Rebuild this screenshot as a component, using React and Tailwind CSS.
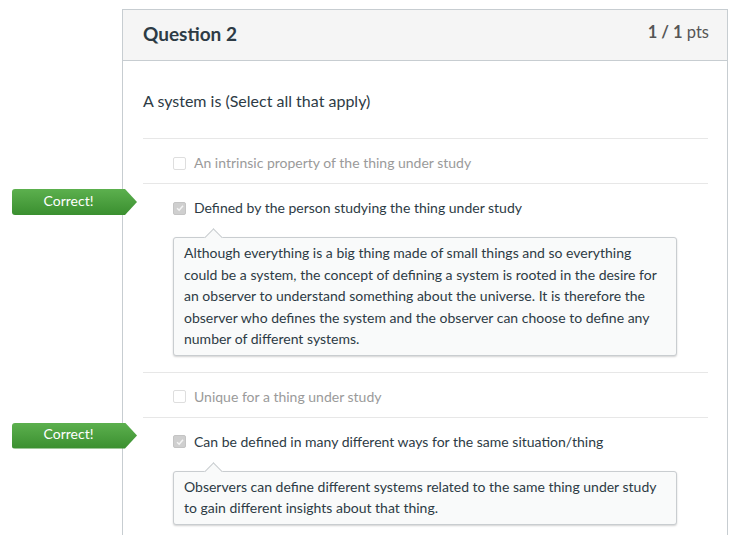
import React from "react";

const answers = [
  { text: "An intrinsic property of the thing under study", selected: false },
  {
    text: "Defined by the person studying the thing under study",
    selected: true,
    comment:
      "Although everything is a big thing made of small things and so everything could be a system, the concept of defining a system is rooted in the desire for an observer to understand something about the universe. It is therefore the observer who defines the system and the observer can choose to define any number of different systems.",
  },
  { text: "Unique for a thing under study", selected: false },
  {
    text: "Can be defined in many different ways for the same situation/thing",
    selected: true,
    comment:
      "Observers can define different systems related to the same thing under study to gain different insights about that thing.",
  },
];

function CorrectBadge() {
  return (
    <div className="absolute left-[-131px] top-[5px] w-[125px] h-[26px] rounded-l-[3px] bg-gradient-to-b from-[#5cb04e] to-[#3a8f2f] [clip-path:polygon(0_0,113px_0,125px_50%,113px_100%,0_100%)] flex items-center">
      <span className="w-[113px] text-center text-white text-[14px] leading-none pb-[3px]">
        Correct!
      </span>
    </div>
  );
}

function Checkbox({ checked }) {
  if (checked) {
    return (
      <div className="w-[13px] h-[13px] rounded-[2px] bg-[#cfcfcf] border border-[#c4c4c4] flex items-center justify-center shrink-0">
        <svg viewBox="0 0 12 12" className="w-[10px] h-[10px]">
          <path d="M2.5 6.2 L5 8.6 L9.6 3.2" fill="none" stroke="#f4f4f4" strokeWidth="1.8" />
        </svg>
      </div>
    );
  }
  return (
    <div className="w-[13px] h-[13px] rounded-[2px] bg-white border border-[#dedede] shrink-0" />
  );
}

function Comment({ text }) {
  return (
    <div className="relative ml-[30px] mr-[31px] mt-[9px] mb-[16px] bg-[#f9fafa] border border-[#c9cdd0] rounded-[3px] shadow-[0_1px_2px_rgba(0,0,0,0.18)] pl-[10px] pr-[10px] pt-[4px] pb-[5px] text-[14px] leading-[21.5px] text-[#2d3b45]">
      <div className="absolute left-[33px] top-[-7px] w-[13px] h-[13px] rotate-45 bg-[#f9fafa] border-l border-t border-[#c9cdd0]" />
      <p className="relative">{text}</p>
    </div>
  );
}

export default function App() {
  return (
    <div className="h-[535px] overflow-hidden bg-white pt-[9px] pl-[122px] font-['Lato',sans-serif] text-[#2d3b45]">
      <div className="w-[606px] border border-b-0 border-[#c7cdd1] min-h-[600px]">
        {/* header */}
        <div className="h-[51px] bg-[#f5f5f5] border-b border-[#c7cdd1] flex justify-between pl-[20px] pr-[18px]">
          <h2 className="self-center text-[19px] font-bold pb-[1px]">Question 2</h2>
          <div className="mt-[10px] text-[16.5px] text-[#555]">
            <span className="font-bold">1 / 1</span> pts
          </div>
        </div>

        {/* body */}
        <div className="pl-[20px] pr-[19px] pt-[29px]">
          <p className="text-[16px] leading-[22px] mb-[26px]">A system is (Select all that apply)</p>

          {answers.map((a, i) => (
            <div key={i} className="relative border-t border-[#e7e7e7]">
              {a.selected && <CorrectBadge />}
              <div className="flex items-center gap-[8px] pl-[30px] pt-[14px] pb-[10px]">
                <Checkbox checked={a.selected} />
                <span
                  className={
                    "text-[14px] leading-[20px] " +
                    (a.selected ? "text-[#2d3b45]" : "text-[#9a9a9a]")
                  }
                >
                  {a.text}
                </span>
              </div>
              {a.comment && <Comment text={a.comment} />}
            </div>
          ))}
        </div>
      </div>
    </div>
  );
}
